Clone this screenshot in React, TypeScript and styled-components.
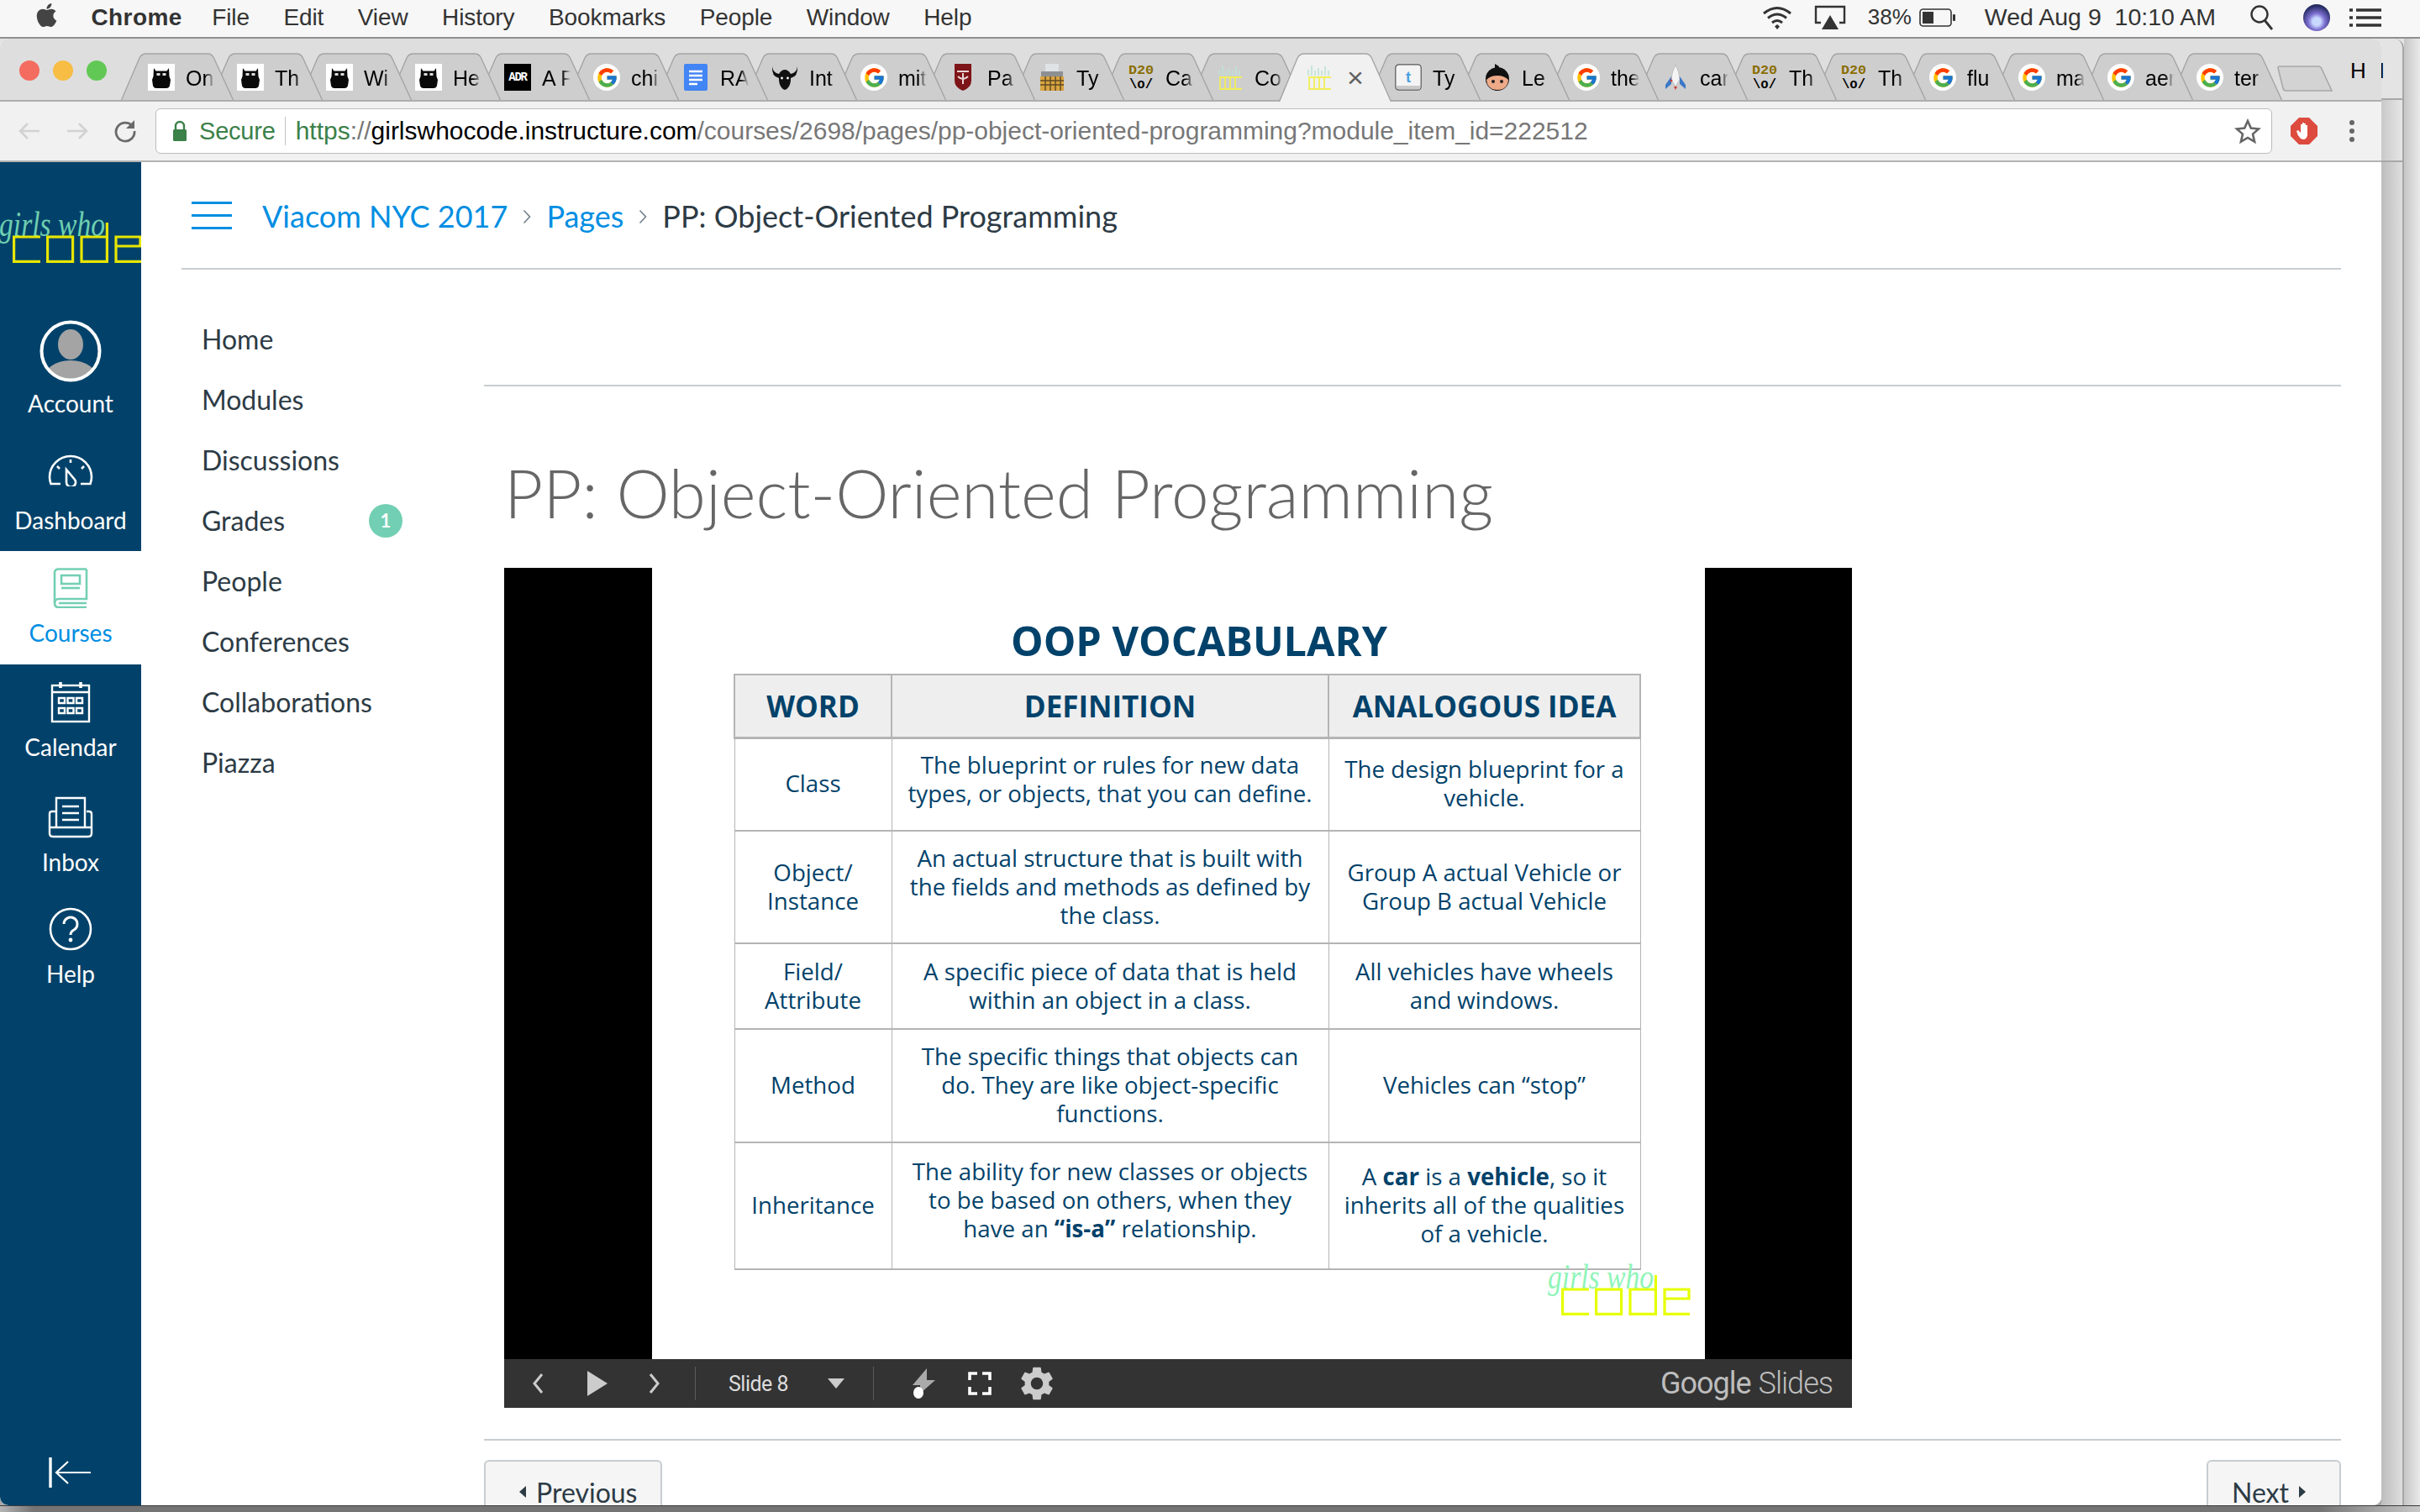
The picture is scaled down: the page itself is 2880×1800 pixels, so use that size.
import React from "react";
import styled, { createGlobalStyle } from "styled-components";
import { FaApple } from "react-icons/fa";
import { FcGoogle } from "react-icons/fc";
import { MdSettings } from "react-icons/md";

const GlobalStyle = createGlobalStyle`
  html, body { margin: 0; padding: 0; background: #ddd; }
  * { box-sizing: border-box; }
`;

/* ---------- favicons ---------- */

const Owl = () => (
  <FavSvg viewBox="0 0 32 32">
    <rect width="32" height="32" fill="#fff" />
    <path d="M7 5l2.5 3.5h13L25 5l.5 10 1.5 4-1 7q-1 3-4 3H10q-3 0-4-3l-1-7 1.5-4z" fill="#0a0a0a" />
    <rect x="10.5" y="11" width="4" height="3" fill="#ddd" />
    <rect x="17.5" y="11" width="4" height="3" fill="#ddd" />
  </FavSvg>
);

const Adr = () => <AdrBox>ADR</AdrBox>;

const GoogleFav = () => (
  <GoogleBox>
    <FcGoogle size={27} />
  </GoogleBox>
);

const DocFav = () => (
  <FavSvg viewBox="0 0 32 32">
    <rect x="2" width="28" height="32" rx="2" fill="#4285f4" />
    <path d="M8 9h16M8 14h16M8 19h16M8 24h10" stroke="#fff" strokeWidth="2.4" />
  </FavSvg>
);

const Viking = () => (
  <FavSvg viewBox="0 0 32 32">
    <path d="M1 3q1 8 8 9 3-5 7-5t7 5q7-1 8-9 1 12-8 14v3q-1 9-7 11-6-2-7-11v-3Q0 15 1 3z" fill="#111" />
    <circle cx="12.5" cy="17" r="1.4" fill="#fff" />
    <circle cx="19.5" cy="17" r="1.4" fill="#fff" />
  </FavSvg>
);

const Shield = () => (
  <FavSvg viewBox="0 0 32 32">
    <path d="M6 0h20v20q0 8-10 12Q6 28 6 20z" fill="#7d1418" />
    <path d="M9 9h14M16 11v13M10 15q6 6 12 0" stroke="#e9d5d5" strokeWidth="2" fill="none" />
  </FavSvg>
);

const Typewriter = () => (
  <FavSvg viewBox="0 0 32 32">
    <rect x="8" y="0" width="16" height="9" fill="#dfe3e6" />
    <rect x="3" y="9" width="26" height="6" fill="#8d8f92" />
    <rect x="2" y="15" width="28" height="17" fill="#d9a441" />
    <path d="M2 20h28M2 25h28M8 15v17M14 15v17M20 15v17M26 15v17" stroke="#5d4a22" strokeWidth="1.4" />
  </FavSvg>
);

const D20 = () => (
  <FavSvg viewBox="0 0 32 32">
    <text
      x="1"
      y="12"
      textLength="30"
      lengthAdjust="spacingAndGlyphs"
      fontFamily="Liberation Mono"
      fontWeight="700"
      fontSize="15"
      fill="#8a6d00"
    >
      D20
    </text>
    <text
      x="2"
      y="29"
      textLength="28"
      lengthAdjust="spacingAndGlyphs"
      fontFamily="Liberation Mono"
      fontWeight="700"
      fontSize="17"
      fill="#000"
    >
      {"\\o/"}
    </text>
  </FavSvg>
);

const Gwc = () => (
  <FavSvg viewBox="0 0 32 32">
    <path d="M3 14V7M7 14V2M11 14V8M15 14V5M19 14V8M23 14V3M27 14V8" stroke="#bfe3d5" strokeWidth="1.6" />
    <path d="M30 16H4v14h26M10 16v14M16 16v14M22 16v14" stroke="#f1ee5a" strokeWidth="1.8" fill="none" />
  </FavSvg>
);

const KeyT = () => (
  <FavSvg viewBox="0 0 32 32">
    <rect x="0.8" y="0.8" width="30.4" height="30.4" rx="4" fill="#f4f4f4" stroke="#555" strokeWidth="1.2" />
    <rect x="2" y="26" width="28" height="4" fill="#c9c9c9" />
    <text x="16" y="22" textAnchor="middle" fontFamily="Liberation Sans" fontWeight="700" fontSize="18" fill="#4a9fe0">
      t
    </text>
  </FavSvg>
);

const Ninja = () => (
  <FavSvg viewBox="0 0 32 32">
    <path d="M13 0l5 3-1 5h-4z" fill="#111" />
    <circle cx="16" cy="18" r="14" fill="#111" />
    <path d="M3 19q5-5 13-5t13 5q-1 12-13 12T3 19z" fill="#eeaa88" />
    <circle cx="11" cy="21" r="2" fill="#222" />
    <circle cx="21" cy="21" r="2" fill="#222" />
  </FavSvg>
);

const Rocket = () => (
  <FavSvg viewBox="0 0 32 32">
    <path d="M16 1q5 9 5 18l-5 8-5-8q0-9 5-18z" fill="#f4f4f4" stroke="#bbb" />
    <path d="M11 15L4 25v5l7-6z" fill="#3b78c7" />
    <path d="M21 15l7 10v5l-7-6z" fill="#3b78c7" />
    <path d="M14 27l2 4 2-4z" fill="#d03a2f" />
    <circle cx="11" cy="20" r="1.4" fill="#d03a2f" />
  </FavSvg>
);

const TABS: { title: string; Icon: React.FC; active?: boolean }[] = [
  { title: "On", Icon: Owl },
  { title: "Th", Icon: Owl },
  { title: "Wi", Icon: Owl },
  { title: "He", Icon: Owl },
  { title: "A F", Icon: Adr },
  { title: "chi", Icon: GoogleFav },
  { title: "RA", Icon: DocFav },
  { title: "Int", Icon: Viking },
  { title: "mit", Icon: GoogleFav },
  { title: "Pa", Icon: Shield },
  { title: "Ty", Icon: Typewriter },
  { title: "Ca", Icon: D20 },
  { title: "Co", Icon: Gwc },
  { title: "", Icon: Gwc, active: true },
  { title: "Ty", Icon: KeyT },
  { title: "Le", Icon: Ninja },
  { title: "the", Icon: GoogleFav },
  { title: "car", Icon: Rocket },
  { title: "Th", Icon: D20 },
  { title: "Th", Icon: D20 },
  { title: "flu", Icon: GoogleFav },
  { title: "ma", Icon: GoogleFav },
  { title: "aer", Icon: GoogleFav },
  { title: "ter", Icon: GoogleFav },
];

const NAV = ["Home", "Modules", "Discussions", "Grades", "People", "Conferences", "Collaborations", "Piazza"];

/* ---------- logo, used in the sidebar and on the slide ---------- */

const Logo: React.FC<{ script: string; block: string }> = ({ script, block }) => (
  <svg width="170" height="72" viewBox="0 0 170 72" aria-label="girls who code">
    <text
      x="0"
      y="39"
      fontFamily="Liberation Serif"
      fontStyle="italic"
      fontSize="42"
      textLength="126"
      lengthAdjust="spacingAndGlyphs"
      fill={script}
    >
      girls who
    </text>
    <g fill="none" stroke={block} strokeWidth="3.2">
      <path d="M49 40H17.6v29.4H49" />
      <rect x="57.6" y="40" width="30" height="29.4" />
      <path d="M128.4 23v46.4H98V40h30.4" />
      <path d="M169 69.4h-30V40h29v11h-29" />
    </g>
  </svg>
);

const CrumbChevron = () => (
  <CrumbSep viewBox="0 0 10 18">
    <path d="M1.5 1.5L8.5 9l-7 7.5" fill="none" stroke="#73818c" strokeWidth="1.6" />
  </CrumbSep>
);

/* ---------- main ---------- */

export default function App() {
  return (
    <Page>
      <GlobalStyle />
      <MenuBar>
        <AppleMark>
          <FaApple size={32} />
        </AppleMark>
        <MenuItem $bold>Chrome</MenuItem>
        <MenuItem>File</MenuItem>
        <MenuItem>Edit</MenuItem>
        <MenuItem>View</MenuItem>
        <MenuItem>History</MenuItem>
        <MenuItem>Bookmarks</MenuItem>
        <MenuItem>People</MenuItem>
        <MenuItem>Window</MenuItem>
        <MenuItem>Help</MenuItem>
        <StatusArea>
          <svg width="36" height="30" viewBox="0 0 36 30">
            <g fill="none" stroke="#333" strokeWidth="3">
              <path d="M2 10q16-13 32 0" />
              <path d="M7 15.5q11-9 22 0" />
              <path d="M12 21q6-5 12 0" />
            </g>
            <path d="M15 25.5l3-2.5 3 2.5-3 3.5z" fill="#333" />
          </svg>
          <StatusGap $w={26} />
          <svg width="38" height="30" viewBox="0 0 38 30">
            <path d="M8 21H2V2h34v19h-6" fill="none" stroke="#333" strokeWidth="2.4" />
            <path d="M19 12l10 17H9z" fill="#333" />
          </svg>
          <StatusGap $w={26} />
          <StatusText $size={26}>38%</StatusText>
          <StatusGap $w={9} />
          <svg width="44" height="24" viewBox="0 0 44 24">
            <rect x="1" y="2" width="37" height="20" rx="3.5" fill="none" stroke="#333" strokeWidth="1.6" />
            <rect x="4" y="5" width="13" height="14" fill="#333" />
            <rect x="40" y="8" width="3" height="8" rx="1" fill="#333" />
          </svg>
          <StatusGap $w={34} />
          <StatusText $size={28.5}>Wed Aug 9&nbsp;&nbsp;10:10 AM</StatusText>
          <StatusGap $w={40} />
          <svg width="30" height="32" viewBox="0 0 30 32">
            <circle cx="12" cy="12" r="9.5" fill="none" stroke="#333" strokeWidth="2.4" />
            <path d="M18 19l9 11" stroke="#333" strokeWidth="2.8" />
          </svg>
          <StatusGap $w={34} />
          <SiriOrb />
          <StatusGap $w={23} />
          <svg width="38" height="24" viewBox="0 0 38 24">
            <path d="M8 3h30M8 12h30M8 21h30" stroke="#333" strokeWidth="3.4" />
            <path d="M0 3h4M0 12h4M0 21h4" stroke="#333" strokeWidth="3.4" />
          </svg>
        </StatusArea>
      </MenuBar>

      <Desk>
        <Browser>
          <TabStrip>
            <Lights>
              <Light $c="#f46b60" />
              <Light $c="#f7bd45" />
              <Light $c="#62c855" />
            </Lights>
            {TABS.map(({ title, Icon, active }, i) => (
              <Tab key={i} $active={active} $z={active ? 60 : 40 - i}>
                <TabShape viewBox="0 0 134 56" preserveAspectRatio="none">
                  <path
                    d="M0.5 56L22 6Q24.5 1 30 1H103Q108 1 110.5 6L133.5 56"
                    fill={active ? "#f1f1f1" : "#cecece"}
                    stroke="#a4a4a4"
                    strokeWidth="1.4"
                  />
                </TabShape>
                <FavSlot>
                  <Icon />
                </FavSlot>
                {active ? <TabClose>×</TabClose> : <TabTitle>{title}</TabTitle>}
              </Tab>
            ))}
            <NewTab viewBox="0 0 66 31">
              <path d="M1 3q0-2 2-2h46q3 0 4 3l12 26H10q-2 0-3-3z" fill="#d3d3d3" stroke="#a8a8a8" strokeWidth="1.6" />
            </NewTab>
            <ProfileLetter>H</ProfileLetter>
          </TabStrip>

          <Toolbar>
            <NavArrow viewBox="0 0 28 24" $left={21}>
              <path d="M26 12H3M12 3l-9 9 9 9" fill="none" stroke="#d2d2d2" strokeWidth="2.6" />
            </NavArrow>
            <NavArrow viewBox="0 0 28 24" $left={29}>
              <path d="M2 12h23M16 3l9 9-9 9" fill="none" stroke="#d2d2d2" strokeWidth="2.6" />
            </NavArrow>
            <NavArrow viewBox="0 0 28 28" $left={29}>
              <path d="M22.5 8A11 11 0 1 0 25 14" fill="none" stroke="#6a6a6a" strokeWidth="2.8" />
              <path d="M25 1v10H15z" fill="#6a6a6a" />
            </NavArrow>
            <Omnibox>
              <svg width="18" height="26" viewBox="0 0 18 26">
                <path d="M4 11V7a5 5 0 0 1 10 0v4" fill="none" stroke="#3b8149" strokeWidth="2.4" />
                <rect x="1" y="11" width="16" height="14" rx="1.5" fill="#3b8149" />
              </svg>
              <SecureLabel>Secure</SecureLabel>
              <OmniDivider />
              <Url>
                <UrlPart $c="#3b8149">https</UrlPart>
                <UrlPart $c="#777">://</UrlPart>
                <UrlPart $c="#000">girlswhocode.instructure.com</UrlPart>
                <UrlPart $c="#777">/courses/2698/pages/pp-object-oriented-programming?module_item_id=222512</UrlPart>
              </Url>
              <StarIcon width="32" height="30" viewBox="0 0 32 30">
                <path
                  d="M16 3l3.8 8.6 9.2.9-7 6.1 2.1 9.1L16 23l-8.1 4.7L10 18.6 3 12.5l9.2-.9z"
                  fill="none"
                  stroke="#666"
                  strokeWidth="2.6"
                />
              </StarIcon>
            </Omnibox>
            <StopSign viewBox="0 0 32 32">
              <path d="M10 0h12l10 10v12L22 32H10L0 22V10z" fill="#dc4b3e" />
              <path d="M12 25q-4-4-5-9l2-1 3 3V8h2v7-9h2v9-8h2v8-6h2v12q-1 5-5 5z" fill="#fff" />
            </StopSign>
            <MenuDots>
              <MenuDot />
              <MenuDot />
              <MenuDot />
            </MenuDots>
          </Toolbar>

          <Canvas>
            <Sidebar>
              <SideLogo>
                <Logo script="#6fcfb0" block="#e7e600" />
              </SideLogo>
              <SideItem $tall $pad={21.5}>
                <IconSlot $h={84}>
                  <svg width="74" height="74" viewBox="0 0 74 74">
                    <defs>
                      <clipPath id="avatarClip">
                        <circle cx="37" cy="37" r="33" />
                      </clipPath>
                    </defs>
                    <g clipPath="url(#avatarClip)" fill="#a4a4a4">
                      <ellipse cx="37" cy="29" rx="15" ry="18" />
                      <ellipse cx="37" cy="72" rx="33" ry="24" />
                    </g>
                    <circle cx="37" cy="37" r="34.5" fill="none" stroke="#fff" strokeWidth="4" />
                  </svg>
                </IconSlot>
                <SideLabel>Account</SideLabel>
              </SideItem>
              <SideItem>
                <IconSlot $h={66}>
                  <DashIcon width="54" height="38" viewBox="0 0 54 38">
                    <g fill="none" stroke="#fff" strokeWidth="2.6">
                      <path d="M15 35H3.5Q2 30 2 27A25 25 0 0 1 52 27Q52 30 50.5 35H39" />
                      <path d="M22 18l10 12a5.5 5.5 0 1 1-10 3z" />
                      <path d="M27 6v4M11 14l3 3M43 14l-3 3" />
                    </g>
                  </DashIcon>
                </IconSlot>
                <SideLabel>Dashboard</SideLabel>
              </SideItem>
              <SideItem $active>
                <IconSlot $h={66}>
                  <svg width="42" height="48" viewBox="0 0 42 48">
                    <g fill="none" stroke="#73cfb3" strokeWidth="2.6">
                      <path d="M40 1.5H7Q2 1.5 2 6v36q0 5 5 5h33" />
                      <path d="M40 1.5V37H7q-5 0-5 5" />
                      <path d="M7 42h33" />
                      <rect x="10" y="9" width="22" height="10" />
                      <path d="M10 24h22" />
                    </g>
                  </svg>
                </IconSlot>
                <SideLabel $active>Courses</SideLabel>
              </SideItem>
              <SideItem $pad={16}>
                <IconSlot $h={66}>
                  <svg width="48" height="50" viewBox="0 0 48 50">
                    <g fill="none" stroke="#fff" strokeWidth="2.4">
                      <rect x="2" y="5" width="44" height="43" />
                      <path d="M2 13h44" />
                    </g>
                    <path d="M12 1v7M36 1v7" stroke="#fff" strokeWidth="3.6" />
                    <path
                      d="M10 20h7v6h-7zM20.5 20h7v6h-7zM31 20h7v6h-7zM10 32h7v6h-7zM20.5 32h7v6h-7zM31 32h7v6h-7z"
                      fill="none"
                      stroke="#fff"
                      strokeWidth="2.4"
                    />
                  </svg>
                </IconSlot>
                <SideLabel>Calendar</SideLabel>
              </SideItem>
              <SideItem $pad={13.5}>
                <IconSlot $h={66}>
                  <svg width="54" height="50" viewBox="0 0 54 50">
                    <g fill="none" stroke="#fff" strokeWidth="2.4">
                      <path d="M10 37V2h34v35" />
                      <path d="M17 12h20M17 20h20M17 28h20" />
                      <path d="M10 18H5q-3 0-3 3v23q0 4 4 4h42q4 0 4-4V21q0-3-3-3h-3" />
                      <path d="M2 37h50" />
                    </g>
                  </svg>
                </IconSlot>
                <SideLabel>Inbox</SideLabel>
              </SideItem>
              <SideItem $pad={15}>
                <IconSlot $h={66}>
                  <svg width="52" height="52" viewBox="0 0 52 52">
                    <circle cx="26" cy="26" r="24" fill="none" stroke="#fff" strokeWidth="2.6" />
                    <path d="M18 20a8 8 0 1 1 12 7q-4 2-4 6" fill="none" stroke="#fff" strokeWidth="3" />
                    <circle cx="26" cy="39" r="2.4" fill="#fff" />
                  </svg>
                </IconSlot>
                <SideLabel>Help</SideLabel>
              </SideItem>
              <CollapseRow>
                <svg width="50" height="36" viewBox="0 0 50 36">
                  <path d="M2 0v36" stroke="#fff" strokeWidth="3.4" />
                  <path d="M50 18H9M23 5L9 18l14 13" fill="none" stroke="#fff" strokeWidth="2.2" />
                </svg>
              </CollapseRow>
            </Sidebar>

            <Content>
              <Header>
                <Hamburger>
                  <HamburgerLine />
                  <HamburgerLine />
                  <HamburgerLine />
                </Hamburger>
                <Crumb href="#">Viacom NYC 2017</Crumb>
                <CrumbChevron />
                <Crumb href="#">Pages</Crumb>
                <CrumbChevron />
                <CrumbCurrent>PP: Object-Oriented Programming</CrumbCurrent>
              </Header>

              <Body>
                <CourseNav>
                  {NAV.map((label) => (
                    <NavRow key={label}>
                      <NavLabel>{label}</NavLabel>
                      {label === "Grades" && <Badge>1</Badge>}
                    </NavRow>
                  ))}
                </CourseNav>

                <Main>
                  <Rule />
                  <PageTitle>PP: Object-Oriented Programming</PageTitle>
                  <Embed>
                    <SlideRow>
                      <Letterbox $w={176} />
                      <Slide>
                        <SlideTitle>OOP VOCABULARY</SlideTitle>
                        <Vocab>
                          <thead>
                            <tr>
                              <HeadCell $w={187}>WORD</HeadCell>
                              <HeadCell $w={520}>DEFINITION</HeadCell>
                              <HeadCell $w={371}>ANALOGOUS IDEA</HeadCell>
                            </tr>
                          </thead>
                          <tbody>
                            <Row $h={111}>
                              <Cell>Class</Cell>
                              <Cell $up={14}>
                                The blueprint or rules for new data
                                <br />
                                types, or objects, that you can define.
                              </Cell>
                              <Cell>
                                The design blueprint for a
                                <br />
                                vehicle.
                              </Cell>
                            </Row>
                            <Row $h={134}>
                              <Cell>
                                Object/
                                <br />
                                Instance
                              </Cell>
                              <Cell>
                                An actual structure that is built with
                                <br />
                                the fields and methods as defined by
                                <br />
                                the class.
                              </Cell>
                              <Cell>
                                Group A actual Vehicle or
                                <br />
                                Group B actual Vehicle
                              </Cell>
                            </Row>
                            <Row $h={102}>
                              <Cell>
                                Field/
                                <br />
                                Attribute
                              </Cell>
                              <Cell>
                                A specific piece of data that is held
                                <br />
                                within an object in a class.
                              </Cell>
                              <Cell>
                                All vehicles have wheels
                                <br />
                                and windows.
                              </Cell>
                            </Row>
                            <Row $h={135}>
                              <Cell>Method</Cell>
                              <Cell>
                                The specific things that objects can
                                <br />
                                do. They are like object-specific
                                <br />
                                functions.
                              </Cell>
                              <Cell>Vehicles can “stop”</Cell>
                            </Row>
                            <Row $h={151}>
                              <Cell>Inheritance</Cell>
                              <Cell $up={15}>
                                The ability for new classes or objects
                                <br />
                                to be based on others, when they
                                <br />
                                have an <strong>“is-a”</strong> relationship.
                              </Cell>
                              <Cell>
                                A <strong>car</strong> is a <strong>vehicle</strong>, so it
                                <br />
                                inherits all of the qualities
                                <br />
                                of a vehicle.
                              </Cell>
                            </Row>
                          </tbody>
                        </Vocab>
                        <SlideLogo>
                          <Logo script="#8ff5b8" block="#e6ff00" />
                        </SlideLogo>
                      </Slide>
                      <Letterbox $w={175} />
                    </SlideRow>
                    <Controls>
                      <CtrlIcon viewBox="0 0 14 26" width="14" height="26" $ml={33}>
                        <path d="M12 2L3 13l9 11" fill="none" stroke="#ccc" strokeWidth="3" />
                      </CtrlIcon>
                      <CtrlIcon viewBox="0 0 24 30" width="24" height="30" $ml={52}>
                        <path d="M0 0l24 15L0 30z" fill="#ccc" />
                      </CtrlIcon>
                      <CtrlIcon viewBox="0 0 14 26" width="14" height="26" $ml={49}>
                        <path d="M2 2l9 11-9 11" fill="none" stroke="#ccc" strokeWidth="3" />
                      </CtrlIcon>
                      <CtrlDivider $ml={41} />
                      <SlideNumber>Slide 8</SlideNumber>
                      <CtrlIcon viewBox="0 0 20 12" width="20" height="12" $ml={44}>
                        <path d="M0 0h20L10 12z" fill="#ccc" />
                      </CtrlIcon>
                      <CtrlDivider $ml={34} />
                      <CtrlIcon viewBox="0 0 28 36" width="28" height="36" $ml={46}>
                        <path d="M17 0v14h10L9 30V20H0z" fill="#aaa" />
                        <ellipse cx="7" cy="29" rx="6" ry="7" fill="#fff" />
                      </CtrlIcon>
                      <CtrlIcon viewBox="0 0 28 28" width="28" height="28" $ml={38}>
                        <path d="M2 10V2h9M17 2h9v8M26 18v8h-9M11 26H2v-8" fill="none" stroke="#fff" strokeWidth="3.6" />
                      </CtrlIcon>
                      <GearSlot>
                        <MdSettings size={48} color="#ccc" />
                      </GearSlot>
                      <Brand>
                        <BrandGoogle>Google</BrandGoogle>
                        <BrandSlides>Slides</BrandSlides>
                      </Brand>
                    </Controls>
                  </Embed>
                  <Rule $mt={37} />
                  <Pager>
                    <PagerButton $pad="0 28px 0 40px">
                      <PagerArrow viewBox="0 0 8 14">
                        <path d="M8 0v14L0 7z" fill="#2d3b45" />
                      </PagerArrow>
                      Previous
                    </PagerButton>
                    <PagerButton $pad="0 40px 0 28px">
                      Next
                      <PagerArrow viewBox="0 0 8 14">
                        <path d="M0 0v14l8-7z" fill="#2d3b45" />
                      </PagerArrow>
                    </PagerButton>
                  </Pager>
                </Main>
              </Body>
            </Content>
          </Canvas>
        </Browser>

        <BackWindow>
          <BackTop>
            <BackLetter>H</BackLetter>
          </BackTop>
          <BackToolbar />
          <BackBody />
        </BackWindow>
        <DeskEdge />
      </Desk>
      <DockShade />
    </Page>
  );
}

const Page = styled.div`
  width: 2880px;
  height: 1800px;
  overflow: hidden;
  display: flex;
  flex-direction: column;
  font-family: "Liberation Sans", Arial, sans-serif;
`;

/* ---------- macOS menu bar ---------- */

const MenuBar = styled.div`
  height: 46px;
  flex: none;
  display: flex;
  align-items: center;
  padding: 0 0 3px 40px;
  gap: 40.5px;
  background: #f7f7f7;
  border-bottom: 2px solid #8f8f8f;
  font-size: 28px;
  color: #333;
`;

const AppleMark = styled.span`
  display: flex;
  width: 31px;
  margin: -6px -3px 0 0;
  color: #444;
`;

const MenuItem = styled.span<{ $bold?: boolean }>`
  font-weight: ${(p) => (p.$bold ? 700 : 400)};
  letter-spacing: ${(p) => (p.$bold ? 0.4 : -0.1)}px;
  margin-right: ${(p) => (p.$bold ? -5 : 0)}px;
`;

const StatusArea = styled.div`
  margin-left: auto;
  padding-right: 46px;
  display: flex;
  align-items: center;
`;

const StatusGap = styled.span<{ $w: number }>`
  width: ${(p) => p.$w}px;
`;

const StatusText = styled.span<{ $size: number }>`
  font-size: ${(p) => p.$size}px;
  white-space: nowrap;
`;

const SiriOrb = styled.span`
  width: 32px;
  height: 32px;
  border-radius: 50%;
  background: radial-gradient(circle at 50% 65%, #c8d8ff 0 18%, #7d6fd0 38%, #2a2f6a 70%, #161a3a 100%);
`;

/* ---------- desktop and windows ---------- */

const Desk = styled.div`
  height: 1746px;
  flex: none;
  display: flex;
  background: linear-gradient(to bottom, #e4e4e4, #a8a8a8);
`;

const Browser = styled.div`
  width: 2834px;
  flex: none;
  display: flex;
  flex-direction: column;
  border-radius: 10px;
  overflow: hidden;
  background: #fff;
`;

const BackWindow = styled.div`
  width: 27px;
  flex: none;
  display: flex;
  flex-direction: column;
  overflow: hidden;
  border-top-right-radius: 12px;
  border-right: 2px solid #a6a6a6;
`;

const BackTop = styled.div`
  height: 73px;
  flex: none;
  padding-top: 23px;
  background: #e4e4e4;
  border-bottom: 2px solid #a8a8a8;
`;

const BackLetter = styled.span`
  display: block;
  margin-left: -15px;
  font-size: 26px;
  color: #000;
`;

const BackToolbar = styled.div`
  height: 74px;
  flex: none;
  background: linear-gradient(to right, #c9c9c9, #e6e6e6);
  border-bottom: 2px solid #a8a8a8;
`;

const BackBody = styled.div`
  flex: 1;
  background: linear-gradient(to right, #bdbdbd, #dedede);
`;

const DeskEdge = styled.div`
  flex: 1;
  background: linear-gradient(to right, #c6c6c6, #e9e9e9);
`;

const DockShade = styled.div`
  flex: 1;
  border-top: 1px solid #3a3a3a;
  background: linear-gradient(to right, #b5b5b5 0, #747474 40px, #747474 2760px, #c8c8c8 2880px);
`;

/* ---------- tabs ---------- */

const TabStrip = styled.div`
  height: 73px;
  flex: none;
  display: flex;
  align-items: flex-end;
  background: #dedede;
`;

const Lights = styled.div`
  width: 144px;
  flex: none;
  align-self: flex-start;
  display: flex;
  gap: 16px;
  padding: 26px 0 0 23px;
`;

const Light = styled.span<{ $c: string }>`
  width: 24px;
  height: 24px;
  border-radius: 50%;
  background: ${(p) => p.$c};
`;

const Tab = styled.div<{ $active?: boolean; $z: number }>`
  position: relative;
  z-index: ${(p) => p.$z};
  width: 134px;
  height: ${(p) => (p.$active ? 58 : 56)}px;
  margin: 0 -28px ${(p) => (p.$active ? -2 : 0)}px 0;
  flex: none;
  display: flex;
  padding: 13px 0 0 32px;
`;

const TabShape = styled.svg`
  position: absolute;
  inset: 0;
  width: 100%;
  height: 100%;
`;

const FavSlot = styled.span`
  position: relative;
  width: 32px;
  height: 32px;
  flex: none;
  display: flex;
`;

const FavSvg = styled.svg`
  width: 32px;
  height: 32px;
  display: block;
`;

const AdrBox = styled.span`
  width: 32px;
  height: 32px;
  background: #000;
  color: #fff;
  font: 700 14px/32px "Liberation Mono", monospace;
  letter-spacing: -1.2px;
  text-align: center;
`;

const GoogleBox = styled.span`
  width: 32px;
  height: 32px;
  border-radius: 50%;
  background: #fff;
  display: flex;
  align-items: center;
  justify-content: center;
`;

const TabTitle = styled.span`
  position: relative;
  margin: 2px 0 0 13px;
  width: 34px;
  overflow: hidden;
  white-space: nowrap;
  font-size: 25px;
  line-height: 30px;
  color: #000;
  -webkit-mask-image: linear-gradient(to right, #000 70%, transparent);
  mask-image: linear-gradient(to right, #000 70%, transparent);
`;

const TabClose = styled.span`
  position: relative;
  margin: 0 0 0 17px;
  font-size: 34px;
  line-height: 32px;
  color: #606060;
`;

const NewTab = styled.svg`
  width: 66px;
  height: 31px;
  flex: none;
  margin: 0 0 10px 22px;
`;

const ProfileLetter = styled.span`
  align-self: flex-start;
  margin: 23px 0 0 21px;
  font-size: 26px;
  color: #000;
`;

/* ---------- toolbar ---------- */

const Toolbar = styled.div`
  height: 74px;
  flex: none;
  display: flex;
  align-items: center;
  background: #f1f1f1;
  border-top: 2px solid #aeaeae;
  border-bottom: 2px solid #b4b4b4;
`;

const NavArrow = styled.svg<{ $left: number }>`
  width: 28px;
  height: 28px;
  flex: none;
  margin-left: ${(p) => p.$left}px;
`;

const Omnibox = styled.div`
  width: 2519px;
  height: 54px;
  flex: none;
  margin-left: 22px;
  padding-left: 19px;
  display: flex;
  align-items: center;
  background: #fff;
  border: 1.5px solid #bcbcbc;
  border-radius: 6px;
`;

const SecureLabel = styled.span`
  margin-left: 14px;
  font-size: 29px;
  color: #3b8149;
  letter-spacing: -0.2px;
`;

const OmniDivider = styled.span`
  width: 1px;
  height: 34px;
  margin: 0 12px 0 11px;
  background: #c4c4c4;
`;

const Url = styled.span`
  font-size: 30px;
  letter-spacing: -0.02px;
  white-space: nowrap;
`;

const UrlPart = styled.span<{ $c: string }>`
  color: ${(p) => p.$c};
`;

const StarIcon = styled.svg`
  margin-left: auto;
  margin-right: 12px;
`;

const StopSign = styled.svg`
  width: 32px;
  height: 32px;
  flex: none;
  margin-left: 22px;
`;

const MenuDots = styled.div`
  display: flex;
  flex-direction: column;
  gap: 4px;
  margin-left: 38px;
`;

const MenuDot = styled.span`
  width: 6px;
  height: 6px;
  border-radius: 50%;
  background: #666;
`;

/* ---------- canvas sidebar ---------- */

const Canvas = styled.div`
  flex: 1;
  min-height: 0;
  display: flex;
  background: #fff;
`;

const Sidebar = styled.nav`
  width: 168px;
  flex: none;
  display: flex;
  flex-direction: column;
  overflow: hidden;
  background: #02426a;
  font-family: Lato, sans-serif;
`;

const SideLogo = styled.div`
  height: 183px;
  flex: none;
  padding-top: 49px;
  margin-left: -1px;
`;

const SideItem = styled.div<{ $active?: boolean; $tall?: boolean; $pad?: number }>`
  height: ${(p) => (p.$tall ? 145.5 : 134.5)}px;
  flex: none;
  display: flex;
  flex-direction: column;
  align-items: center;
  justify-content: flex-end;
  padding-bottom: ${(p) => p.$pad ?? 17.5}px;
  background: ${(p) => (p.$active ? "#fff" : "transparent")};
`;

const IconSlot = styled.span<{ $h: number }>`
  height: ${(p) => p.$h}px;
  flex: none;
  display: flex;
  align-items: center;
  justify-content: center;
`;

const DashIcon = styled.svg`
  margin-top: -12px;
`;

const SideLabel = styled.span<{ $active?: boolean }>`
  height: 40px;
  line-height: 40px;
  font-size: 28px;
  color: ${(p) => (p.$active ? "#008ee2" : "#fff")};
`;

const CollapseRow = styled.div`
  margin-top: auto;
  padding: 0 0 21px 58px;
  display: flex;
`;

/* ---------- page content ---------- */

const Content = styled.div`
  flex: 1;
  min-width: 0;
  display: flex;
  flex-direction: column;
  padding: 0 48px;
  font-family: Lato, sans-serif;
  color: #2d3b45;
`;

const Header = styled.header`
  height: 128px;
  flex: none;
  display: flex;
  align-items: center;
  padding: 1px 0 0 12px;
  border-bottom: 2px solid #c7cdd1;
  font-size: 36px;
`;

const Hamburger = styled.div`
  width: 48px;
  margin-right: 36px;
  display: flex;
  flex-direction: column;
  gap: 12px;
`;

const HamburgerLine = styled.span`
  height: 3px;
  background: #008ee2;
`;

const Crumb = styled.a`
  color: #008ee2;
  text-decoration: none;
`;

const CrumbSep = styled.svg`
  width: 10px;
  height: 18px;
  flex: none;
  margin: 3px 18px 0;
`;

const CrumbCurrent = styled.span`
  color: #2d3b45;
`;

const Body = styled.div`
  flex: 1;
  min-height: 0;
  display: flex;
`;

const CourseNav = styled.div`
  width: 360px;
  flex: none;
  padding: 46px 0 0 24px;
`;

const NavRow = styled.div`
  height: 72px;
  display: flex;
  align-items: center;
  font-size: 32px;
  position: relative;
`;

const NavLabel = styled.span`
  color: #2d3b45;
`;

const Badge = styled.span`
  position: absolute;
  left: 199px;
  top: 17px;
  width: 40px;
  height: 40px;
  border-radius: 50%;
  background: #73cfb3;
  color: #fff;
  font-size: 22px;
  font-weight: 700;
  line-height: 40px;
  text-align: center;
`;

const Main = styled.main`
  flex: 1;
  min-width: 0;
  padding-top: 137px;
  display: flex;
  flex-direction: column;
`;

const Rule = styled.hr<{ $mt?: number }>`
  height: 2px;
  flex: none;
  width: 100%;
  margin: ${(p) => p.$mt ?? 0}px 0 0;
  border: 0;
  background: #c7cdd1;
`;

const PageTitle = styled.h1`
  height: 216px;
  flex: none;
  margin: 0 0 0 24px;
  padding-top: 36px;
  display: flex;
  align-items: center;
  font-size: 80px;
  font-weight: 300;
  color: #666;
`;

/* ---------- embedded slide ---------- */

const Embed = styled.div`
  width: 1604px;
  flex: none;
  margin-left: 24px;
`;

const SlideRow = styled.div`
  height: 942px;
  display: flex;
`;

const Letterbox = styled.div<{ $w: number }>`
  width: ${(p) => p.$w}px;
  flex: none;
  background: #000;
`;

const Slide = styled.div`
  position: relative;
  flex: 1;
  padding: 61px 0 0 97px;
  background: #fff;
  font-family: "Open Sans", sans-serif;
  color: #02426a;
`;

const SlideTitle = styled.div`
  width: 1078px;
  padding-left: 30px;
  text-align: center;
  font-size: 48.6px;
  line-height: 50px;
  font-weight: 700;
`;

const Vocab = styled.table`
  width: 1078px;
  margin-top: 15px;
  table-layout: fixed;
  border-collapse: collapse;
  text-align: center;
`;

const HeadCell = styled.th<{ $w: number }>`
  width: ${(p) => p.$w}px;
  height: 75px;
  padding: 0;
  background: #eeeeee;
  border: 2px solid #b4b4b4;
  border-bottom-width: 3px;
  font-size: 35px;
  font-weight: 700;
`;

const Row = styled.tr<{ $h: number }>`
  height: ${(p) => p.$h}px;
  border-bottom: 2px solid #b4b4b4;
`;

const Cell = styled.td<{ $up?: number }>`
  padding: 0 0 ${(p) => p.$up ?? 3}px;
  border-left: 1.5px solid #b4b4b4;
  border-right: 1.5px solid #b4b4b4;
  font-size: 27.7px;
  line-height: 34px;
  white-space: nowrap;
`;

const SlideLogo = styled.div`
  position: absolute;
  left: 1066px;
  top: 819px;
`;

const Controls = styled.div`
  height: 58px;
  display: flex;
  align-items: center;
  background: #333;
  font-family: Roboto, sans-serif;
`;

const CtrlIcon = styled.svg<{ $ml: number }>`
  flex: none;
  margin-left: ${(p) => p.$ml}px;
`;

const CtrlDivider = styled.span<{ $ml: number }>`
  width: 1px;
  height: 40px;
  flex: none;
  margin-left: ${(p) => p.$ml}px;
  background: #5c5c5c;
`;

const SlideNumber = styled.span`
  margin-left: 39px;
  width: 74px;
  font-size: 25px;
  letter-spacing: -0.5px;
  color: #ddd;
  white-space: nowrap;
`;

const GearSlot = styled.span`
  display: flex;
  margin-left: 30px;
`;

const Brand = styled.div`
  margin-left: auto;
  padding-right: 23px;
  display: flex;
  align-items: baseline;
  gap: 9px;
  color: #bdbdbd;
  font-size: 36px;
  letter-spacing: -1px;
`;

const BrandGoogle = styled.span`
  font-weight: 400;
`;

const BrandSlides = styled.span`
  font-weight: 300;
`;

/* ---------- pager ---------- */

const Pager = styled.div`
  margin-top: 23px;
  display: flex;
  justify-content: space-between;
`;

const PagerButton = styled.div<{ $pad: string }>`
  height: 80px;
  padding: ${(p) => p.$pad};
  padding-top: 18px;
  display: flex;
  align-items: flex-start;
  gap: 12px;
  background: #f5f5f5;
  border: 2px solid #c7cdd1;
  border-radius: 6px;
  font-size: 32px;
  line-height: 38px;
  color: #2d3b45;
`;

const PagerArrow = styled.svg`
  width: 8px;
  height: 14px;
  flex: none;
  margin-top: 11px;
`;
